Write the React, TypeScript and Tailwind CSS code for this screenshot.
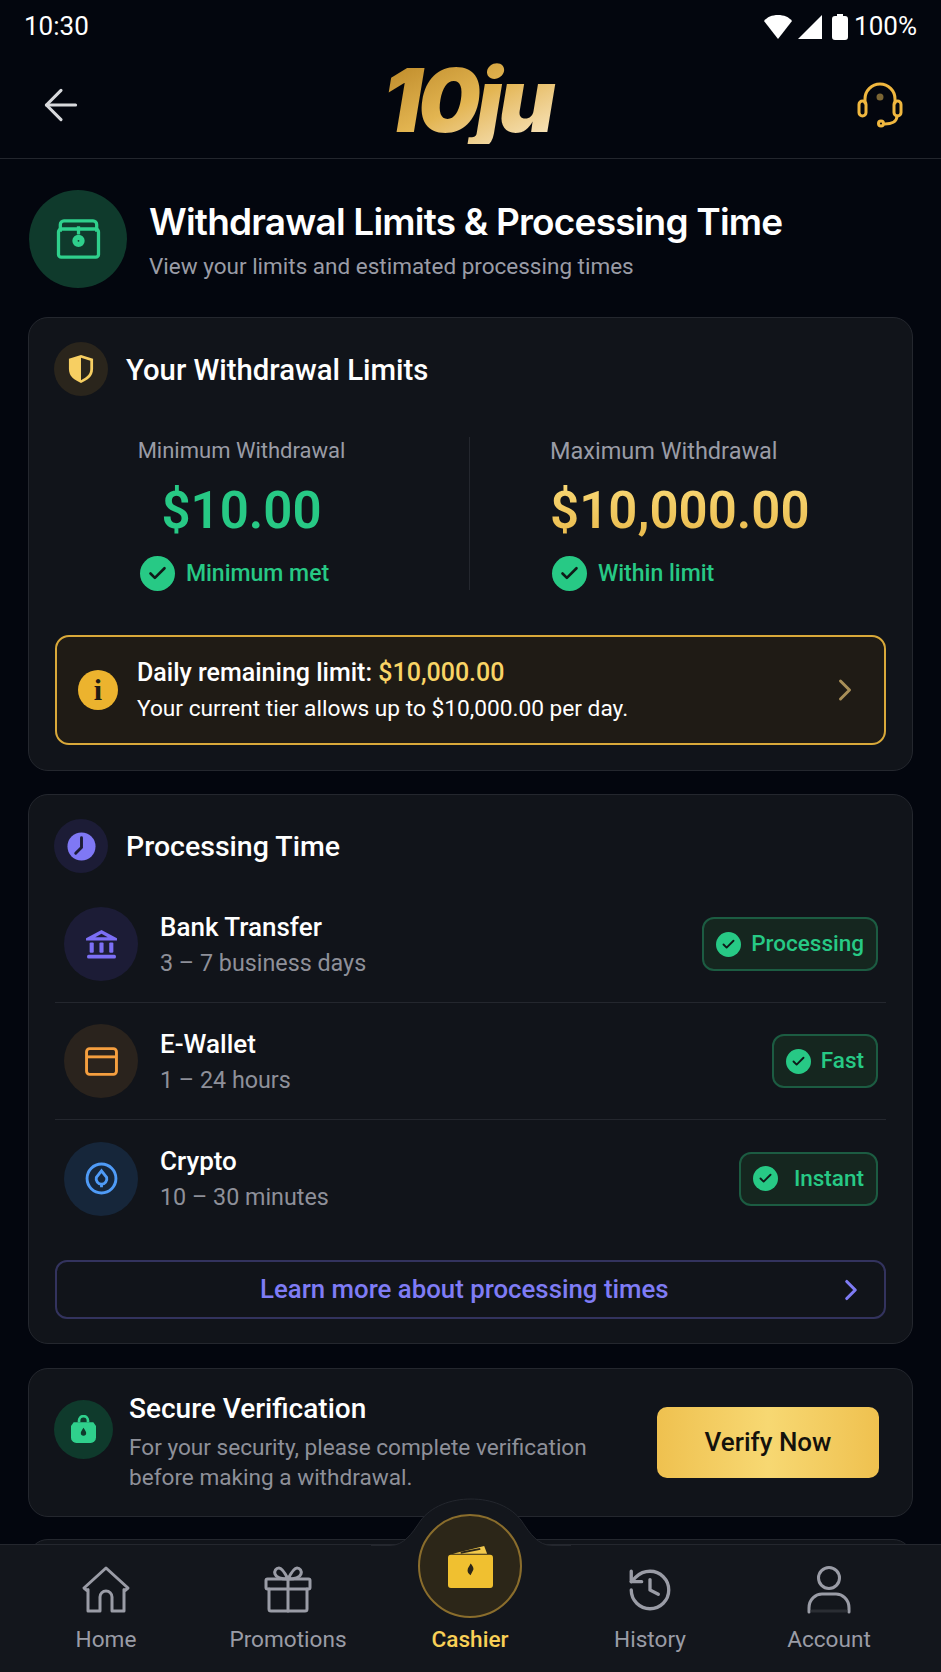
import { ArrowLeft, ChevronRight, Check, History } from 'lucide-react';

const rows = [
  { name: 'Bank Transfer', time: '3 – 7 business days', badge: 'Processing', gap: 'gap-[10px]', circle: 'bg-[#1c1c36]', icon: <BankIcon /> },
  { name: 'E-Wallet', time: '1 – 24 hours', badge: 'Fast', gap: 'gap-[10px]', circle: 'bg-[#2a231d]', icon: <CardIcon /> },
  { name: 'Crypto', time: '10 – 30 minutes', badge: 'Instant', gap: 'gap-[16px]', circle: 'bg-[#16263a]', icon: <CryptoIcon /> },
];

const navItems = [
  { label: 'Home', icon: <HomeIcon /> },
  { label: 'Promotions', icon: <GiftIcon /> },
  { label: 'Cashier', icon: null },
  { label: 'History', icon: <History className="w-[50px] h-[50px]" strokeWidth={1.6} /> },
  { label: 'Account', icon: <AccountIcon /> },
];

function HomeIcon() {
  return (
    <svg viewBox="0 0 50 50" className="w-[50px] h-[50px]" fill="none" stroke="currentColor" strokeWidth="3" strokeLinejoin="round" strokeLinecap="round">
      <path d="M3 23 25 3l22 20-3 2.500-1-1V46H31V32a6 6 0 0 0-12 0v14H7V24.500l-1 1z" />
    </svg>
  );
}

function GiftIcon() {
  return (
    <svg viewBox="0 0 50 50" className="w-[50px] h-[50px]" fill="none" stroke="currentColor" strokeWidth="3" strokeLinejoin="round" strokeLinecap="round">
      <rect x="3" y="14" width="44" height="10" rx="1.500" />
      <path d="M6 24v20a2 2 0 0 0 2 2h34a2 2 0 0 0 2-2V24" />
      <path d="M25 14v32" />
      <path d="M25 14c-3-6-6-11-9-11s-5 3-4 6 5 5 13 5z" />
      <path d="M25 14c3-6 6-11 9-11s5 3 4 6-5 5-13 5z" />
    </svg>
  );
}

function AccountIcon() {
  return (
    <svg viewBox="0 0 50 50" className="w-[50px] h-[50px]" fill="none" stroke="currentColor" strokeWidth="3" strokeLinecap="round">
      <circle cx="25" cy="13" r="10.500" />
      <path d="M5 47v-4c0-9 7-14 13-14h14c6 0 13 5 13 14v4" />
      <path d="M8 46h34" stroke="#2a2d33" />
    </svg>
  );
}

function BankIcon() {
  return (
    <svg viewBox="0 0 32 32" className="w-[33px] h-[33px]" fill="#7c6ff5">
      <path d="M16 2 31 10v2H1v-2z" />
      <path d="M16 5.500 10 9h12z" fill="#1c1c36" />
      <rect x="4.500" y="14" width="4" height="10" rx="1" />
      <rect x="14" y="14" width="4" height="10" rx="1" />
      <rect x="23.500" y="14" width="4" height="10" rx="1" />
      <rect x="2" y="26" width="28" height="3.500" rx="1.500" />
    </svg>
  );
}

function CardIcon() {
  return (
    <svg viewBox="0 0 32 28" className="w-[33px] h-[29px]" fill="none" stroke="#f59f3f" strokeWidth="2.800">
      <rect x="1.500" y="1.500" width="29" height="25" rx="3" />
      <path d="M1.500 9.500h29" />
    </svg>
  );
}

function CryptoIcon() {
  return (
    <svg viewBox="0 0 32 32" className="w-[33px] h-[33px]" fill="none" stroke="#4f9bf7" strokeWidth="2.800">
      <circle cx="16" cy="16" r="14" />
      <path d="M16 8.500 21 15a5.200 5.200 0 0 1-5 6.500 5.200 5.200 0 0 1-5-6.500z" />
      <path d="M16 21.500v3" />
    </svg>
  );
}

function CheckBadge({ size }: { size: string }) {
  return (
    <span className={`${size} rounded-full bg-[#27c985] flex items-center justify-center shrink-0`}>
      <Check className="w-[60%] h-[60%] text-[#0f1a18]" strokeWidth={3} />
    </span>
  );
}

function Logo() {
  return (
    <span className="mb-[10px] font-['Inter',sans-serif] font-black italic text-[88px] leading-none tracking-[-4px] text-transparent bg-clip-text bg-gradient-to-br from-[#b98522] via-[#e3b551] to-[#fbeccb] pr-2">
      10ju
    </span>
  );
}

export default function App() {
  return (
    <div className="relative w-[941px] h-[1672px] overflow-hidden flex flex-col bg-[#03060e] text-white font-['Roboto','Noto_Sans',sans-serif]">
      {/* status bar */}
      <div className="h-[52px] shrink-0 px-[24px] pt-[10px] flex items-start justify-between">
        <span className="text-[26px] leading-[33px]">10:30</span>
        <div className="flex items-center gap-[6px] h-[33px]">
          <svg viewBox="0 0 28 24" className="w-[28px] h-[24px]" fill="#fff"><path d="M0 6C3 2 8 0 14 0s11 2 14 6L14 24z" /></svg>
          <svg viewBox="0 0 24 24" className="w-[24px] h-[24px]" fill="#fff"><path d="M24 0v24H0z" /></svg>
          <svg viewBox="0 0 16 26" className="w-[16px] h-[26px] ml-[4px]" fill="#fff"><path d="M5 0h6v2h2a3 3 0 0 1 3 3v18a3 3 0 0 1-3 3H3a3 3 0 0 1-3-3V5a3 3 0 0 1 3-3h2z" /></svg>
          <span className="text-[26px] leading-[33px]">100%</span>
        </div>
      </div>

      {/* header */}
      <header className="h-[107px] shrink-0 border-b border-[#23262d] px-[36px] flex items-center justify-between">
        <ArrowLeft className="w-[50px] h-[50px] text-[#d8d9dc]" strokeWidth={1.5} />
        <Logo />
        <svg viewBox="0 0 48 48" className="w-[48px] h-[48px] mr-[1px]" fill="none" stroke="#f0b73f" strokeWidth="3" strokeLinecap="round">
          <path d="M9 22v-4a15 15 0 0 1 30 0v4" />
          <rect x="3" y="20" width="7" height="15" rx="3.500" />
          <rect x="38" y="20" width="7" height="15" rx="3.500" />
          <path d="M41 35c0 6-6 8-12 8" />
          <circle cx="25" cy="42.500" r="2.500" />
          <circle cx="24" cy="16" r="2" stroke="#7b6534" fill="#7b6534" />
        </svg>
      </header>

      <main className="flex-1 min-h-0 px-[28px] overflow-hidden">
        {/* page title */}
        <div className="mt-[31px] flex items-center">
          <div className="ml-[1px] w-[98px] h-[98px] rounded-full bg-[#0f3a2c] flex items-center justify-center shrink-0">
            <svg viewBox="0 0 48 44" className="w-[47px] h-[40px]" fill="none" stroke="#2fd08c" strokeWidth="3.600" strokeLinejoin="round">
              <path d="M4 14V6a4 4 0 0 1 4-4h32a4 4 0 0 1 4 4v8" />
              <rect x="2" y="11" width="44" height="31" rx="3" />
              <path d="M24 8v9" />
              <circle cx="24" cy="24" r="5" fill="#2fd08c" />
              <circle cx="24" cy="24" r="1" fill="#0f3a2c" stroke="none" />
            </svg>
          </div>
          <div className="ml-[22px] pt-[2px]">
            <h1 className="font-['Inter',sans-serif] text-[37px] leading-[44px] font-semibold tracking-[-0.8px]">Withdrawal Limits &amp; Processing Time</h1>
            <p className="text-[22.500px] leading-[28px] mt-[8px] text-[#9a9ca6]">View your limits and estimated processing times</p>
          </div>
        </div>

        {/* limits card */}
        <section className="mt-[29px] rounded-[20px] border border-[#24272e] bg-[#11141a] px-[25px] pt-[24px] pb-[25px]">
          <div className="flex items-center gap-[18px]">
            <div className="w-[54px] h-[54px] rounded-full bg-[#2a251c] flex items-center justify-center">
              <svg viewBox="0 0 28 32" className="w-[26px] h-[30px]">
                <path d="M14 1 27 5v11c0 8-6 12-13 15C7 28 1 24 1 16V5z" fill="#f7cf62" />
                <path d="M14 4 24 7v9c0 6-4 9-10 12z" fill="#2a251c" />
              </svg>
            </div>
            <h2 className="text-[29.300px] leading-[34px] font-medium pt-[2px]">Your Withdrawal Limits</h2>
          </div>

          <div className="mt-[41px] h-[153px] flex">
            <div className="w-[416px] pr-[40px] flex flex-col items-center border-r border-[#24272e]">
              <p className="text-[22px] leading-[28px] text-[#9a9ca6]">Minimum Withdrawal</p>
              <p className="mt-[16px] text-[51px] leading-[60px] font-semibold text-[#27c985]">$10.00</p>
              <div className="mt-[15px] flex items-center gap-[11px] mr-[14px]">
                <CheckBadge size="w-[35px] h-[35px]" />
                <span className="text-[23px] leading-[34px] font-medium text-[#27c985]">Minimum met</span>
              </div>
            </div>
            <div className="flex-1 pl-[80px] flex flex-col items-start">
              <p className="text-[23.500px] leading-[28px] text-[#9a9ca6]">Maximum Withdrawal</p>
              <p className="mt-[16px] text-[51px] leading-[60px] font-semibold text-transparent bg-clip-text bg-gradient-to-b from-[#f9d976] to-[#e9b949]">$10,000.00</p>
              <div className="mt-[15px] flex items-center gap-[11px] ml-[2px]">
                <CheckBadge size="w-[35px] h-[35px]" />
                <span className="text-[23px] leading-[34px] font-medium text-[#27c985]">Within limit</span>
              </div>
            </div>
          </div>

          <div className="mt-[45px] mx-[1px] h-[110px] rounded-[14px] border-2 border-[#d9a93a] bg-[#1f1b15] pl-[21px] pr-[21px] flex items-center">
            <div className="w-[40px] h-[40px] rounded-full bg-[#ecb32e] flex items-center justify-center shrink-0 text-[#1f1b15] font-['Liberation_Serif',serif] font-bold text-[30px] leading-none">i</div>
            <div className="ml-[19px] flex-1">
              <p className="text-[25px] leading-[30px] font-medium">Daily remaining limit: <span className="text-[#f9d465]">$10,000.00</span></p>
              <p className="text-[22.700px] leading-[28px] mt-[7px]">Your current tier allows up to $10,000.00 per day.</p>
            </div>
            <ChevronRight className="w-[36px] h-[36px] text-[#a98f58]" strokeWidth={2} />
          </div>
        </section>

        {/* processing card */}
        <section className="mt-[23px] rounded-[20px] border border-[#24272e] bg-[#11141a] px-[25px] pt-[24px] pb-[24px]">
          <div className="flex items-center gap-[18px]">
            <div className="w-[54px] h-[54px] rounded-full bg-[#1c1c36] flex items-center justify-center">
              <svg viewBox="0 0 30 30" className="w-[29px] h-[29px]">
                <circle cx="15" cy="15" r="14.500" fill="#7f78f5" />
                <path d="M15 6v10l-6 6" fill="none" stroke="#1c1c36" strokeWidth="3" strokeLinecap="round" />
              </svg>
            </div>
            <h2 className="text-[28.500px] leading-[34px] font-medium pt-[2px]">Processing Time</h2>
          </div>

          <div className="mt-[13px] mx-[1px]">
            {rows.map((r, i) => (
              <div key={r.name} className={`h-[117px] pl-[9px] pr-[8px] flex items-center ${i < 2 ? 'border-b border-[#24272e]' : ''}`}>
                <div className={`w-[74px] h-[74px] rounded-full ${r.circle} flex items-center justify-center shrink-0`}>{r.icon}</div>
                <div className="ml-[22px] flex-1">
                  <p className="text-[26px] leading-[32px] font-medium">{r.name}</p>
                  <p className="text-[23.300px] leading-[30px] mt-[5px] text-[#8e9099]">{r.time}</p>
                </div>
                <div className={`h-[54px] rounded-[12px] border-2 border-[#1c5c42] bg-[#15261f] pl-[12px] pr-[12px] flex items-center ${r.gap}`}>
                  <CheckBadge size="w-[25px] h-[25px]" />
                  <span className="text-[22.500px] font-medium text-[#27c985]">{r.badge}</span>
                </div>
              </div>
            ))}
          </div>

          <div className="mt-[23px] mx-[1px] h-[59px] rounded-[12px] border-2 border-[#33335e] flex items-center pl-[203px] pr-[16px] justify-between">
            <span className="text-[25.800px] font-medium text-[#7f7cf5]">Learn more about processing times</span>
            <ChevronRight className="w-[34px] h-[34px] text-[#7f7cf5]" strokeWidth={2.2} />
          </div>
        </section>

        {/* verification card */}
        <section className="mt-[24px] h-[149px] rounded-[20px] border border-[#24272e] bg-[#11141a] pl-[25px] pr-[33px] flex items-center">
          <div className="self-start mt-[31px] w-[59px] h-[59px] rounded-full bg-[#0f3a2c] flex items-center justify-center shrink-0">
            <svg viewBox="0 0 28 32" className="w-[25px] h-[29px]">
              <path d="M9 8V6a5 5 0 0 1 10 0v2" fill="none" stroke="#2fd08c" strokeWidth="3" />
              <path d="M3 8h22l3 4v13a6 6 0 0 1-6 6H6a6 6 0 0 1-6-6V12z" fill="#2fd08c" />
              <path d="M14 14c2 3 3 4.500 3 6a3 3 0 0 1-6 0c0-1.500 1-3 3-6z" fill="#0f3a2c" />
            </svg>
          </div>
          <div className="ml-[16px] flex-1">
            <p className="text-[28px] leading-[34px] font-medium">Secure Verification</p>
            <p className="text-[22.600px] leading-[30px] mt-[7px] text-[#8e9099]">For your security, please complete verification<br />before making a withdrawal.</p>
          </div>
          <div className="w-[222px] h-[71px] rounded-[10px] bg-gradient-to-r from-[#efc14f] via-[#f7d872] to-[#efc14f] flex items-center justify-center text-[26px] font-medium text-[#14120c]">Verify Now</div>
        </section>

        {/* next card, mostly hidden behind the nav */}
        <section className="mt-[22px] h-[40px] rounded-[20px] border border-[#24272e] bg-[#11141a]" />
      </main>

      {/* bottom nav */}
      <nav className="absolute left-0 right-0 bottom-0 h-[128px] border-t border-[#24272e] bg-[#13161c] pl-[15px] grid grid-cols-[182px_182px_182px_178px_180px]">
        <svg viewBox="0 0 200 48" className="absolute left-[371px] top-[-47px] w-[200px] h-[48px]">
          <path d="M0 47.500h19c14 0 22-12 30-24C60 8 80 1 100 1s40 7 51 22.500c8 12 16 24 30 24h19V48H0z" fill="#13161c" />
          <path d="M0 47.500h19c14 0 22-12 30-24C60 8 80 1 100 1s40 7 51 22.500c8 12 16 24 30 24h19" fill="none" stroke="#24272e" />
        </svg>
        <div className="absolute left-[418px] top-[-31px] w-[104px] h-[104px] rounded-full border-2 border-[#8a6d2c] bg-[#2c2618] flex items-center justify-center">
          <svg viewBox="0 0 48 46" className="w-[47px] h-[45px]">
            <path d="M6 10 38 2l3 8z" fill="#f2c94c" />
            <path d="M14 9 34 5" stroke="#2c2618" strokeWidth="2" />
            <rect x="1" y="11" width="46" height="34" rx="3" fill="#f0c030" />
            <path d="M24 20c3 3 4 6 2 8l-2 4c-2-2-3-3-3-5 0-3 2-4 3-7z" fill="#2c2618" />
          </svg>
        </div>
        {navItems.map((n) => {
          const active = n.label === 'Cashier';
          return (
            <div key={n.label} className={`flex flex-col items-center justify-end pb-[18px] ${active ? 'text-[#f9d056]' : 'text-[#9a9ca6]'}`}>
              {n.icon}
              <span className={`mt-[11px] text-[22.600px] leading-[28px] ${active ? 'font-medium' : ''}`}>{n.label}</span>
            </div>
          );
        })}
      </nav>
    </div>
  );
}
